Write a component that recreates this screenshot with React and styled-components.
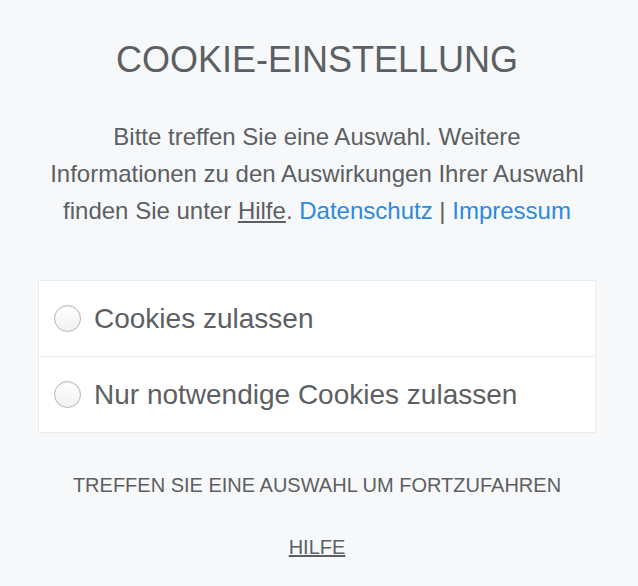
import React, { useState } from "react";
import styled, { createGlobalStyle } from "styled-components";

const Global = createGlobalStyle`
  html, body {
    margin: 0;
    padding: 0;
    background: #f7f8f9;
  }
  body {
    font-family: "Liberation Sans", Arial, sans-serif;
    color: #5c5f63;
  }
`;

const Page = styled.div`
  width: 638px;
  height: 586px;
  box-sizing: border-box;
  padding: 38px 42px 0 38px;
  display: flex;
  flex-direction: column;
  align-items: center;
  background: #f7f8f9;
`;

const Title = styled.h1`
  margin: 0;
  font-size: 36px;
  font-weight: 400;
  line-height: 44px;
  color: #5c5f63;
`;

const Intro = styled.p`
  margin: 36px 0 0;
  text-align: center;
  font-size: 24px;
  line-height: 37px;
  color: #5c5f63;
  white-space: nowrap;

  .help {
    color: #5c5f63;
    text-decoration: underline;
  }
  .link {
    color: #2b8ae0;
    text-decoration: none;
  }
`;

const Card = styled.div`
  margin-top: 51px;
  width: 100%;
  background: #fff;
  border: 1px solid #ececec;
  box-sizing: border-box;
`;

const Row = styled.label`
  display: flex;
  align-items: center;
  height: 75px;
  padding: 0 15px;
  gap: 13px;
  font-size: 28px;
  color: #5c5f63;
  cursor: pointer;
  & + & {
    border-top: 1px solid #ececec;
  }
`;

const Radio = styled.span`
  width: 27px;
  height: 27px;
  border-radius: 50%;
  box-sizing: border-box;
  border: 1px solid #b4b4b4;
  background: linear-gradient(#ffffff, #f1f1f1);
  box-shadow: inset 0 1px 1px rgba(0, 0, 0, 0.06);
  display: flex;
  align-items: center;
  justify-content: center;
  flex-shrink: 0;
  &::after {
    content: "";
    width: 11px;
    height: 11px;
    border-radius: 50%;
    background: ${({ $checked }) => ($checked ? "#2b8ae0" : "transparent")};
  }
`;

const Notice = styled.div`
  margin-top: 41px;
  font-size: 20px;
  line-height: 22px;
  color: #5c5f63;
`;

const HelpLink = styled.a`
  margin-top: 40px;
  font-size: 20px;
  line-height: 22px;
  color: #5c5f63;
  text-decoration: underline;
`;

const options = ["Cookies zulassen", "Nur notwendige Cookies zulassen"];

const App = () => {
  const [choice, setChoice] = useState(null);
  return (
    <>
      <Global />
      <Page>
        <Title>COOKIE-EINSTELLUNG</Title>
        <Intro>
          Bitte treffen Sie eine Auswahl. Weitere
          <br />
          Informationen zu den Auswirkungen Ihrer Auswahl
          <br />
          finden Sie unter <span className="help">Hilfe</span>.{" "}
          <a className="link" href="#">Datenschutz</a> |{" "}
          <a className="link" href="#">Impressum</a>
        </Intro>
        <Card>
          {options.map((o, i) => (
            <Row key={o} onClick={() => setChoice(i)}>
              <Radio $checked={choice === i} />
              {o}
            </Row>
          ))}
        </Card>
        <Notice>TREFFEN SIE EINE AUSWAHL UM FORTZUFAHREN</Notice>
        <HelpLink href="#">HILFE</HelpLink>
      </Page>
    </>
  );
};

export default App;
